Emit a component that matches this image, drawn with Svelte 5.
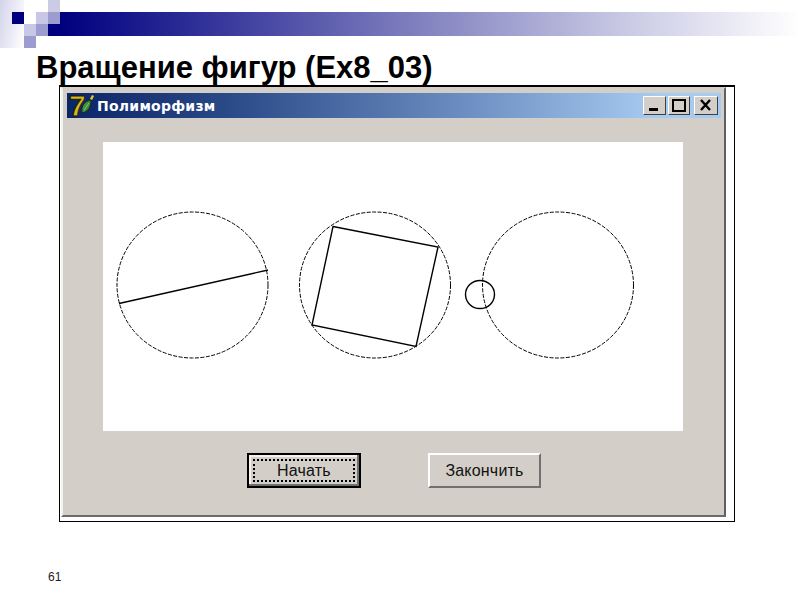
<script lang="ts">
  const circles = [
    { cx: 89.5, cy: 143, rx: 75.5, ry: 73 },
    { cx: 272, cy: 143, rx: 75.5, ry: 73 },
    { cx: 455, cy: 143, rx: 75.5, ry: 73 },
  ];
</script>

<div class="slide">
  <div class="decor" aria-hidden="true">
    <div class="fade"></div>
    <div class="sq navy s1"></div>
    <div class="sq top"></div>
    <div class="sq light s2"></div>
    <div class="sq mid s3"></div>
    <div class="band"></div>
    <div class="sq light s4"></div>
    <div class="sq mid s5"></div>
    <div class="sq navy s6"></div>
    <div class="sq mid s7"></div>
  </div>

  <h1>Вращение фигур (Ex8_03)</h1>

  <div class="frame">
    <div class="window">
      <div class="titlebar">
        <div class="app-icon">
          <span class="seven">7</span>
          <svg class="leaf" width="13" height="20" viewBox="0 0 13 20">
            <path d="M1 18C0 11 3 6 10 5 10 12 7 17 1 18z" fill="#3f8f3a" stroke="#0e2e18" stroke-width="1" />
            <path d="M3 15l5-7" stroke="#8fc070" stroke-width="1" fill="none" />
            <path d="M9 4l2-4 2 1-2 4z" fill="#e8d020" />
          </svg>
        </div>
        <span class="caption">Полиморфизм</span>
        <div class="controls">
          <button class="ctl" aria-label="Свернуть">
            <svg width="21" height="17" viewBox="0 0 21 17"><rect x="5" y="11" width="9" height="3" fill="#000" /></svg>
          </button>
          <button class="ctl max" aria-label="Развернуть">
            <svg width="20" height="17" viewBox="0 0 20 17"><rect x="4" y="3" width="12" height="11" fill="none" stroke="#000" stroke-width="2" /></svg>
          </button>
          <button class="ctl close" aria-label="Закрыть">
            <svg width="22" height="17" viewBox="0 0 22 17"><path d="M6 3l9 10M15 3l-9 10" stroke="#000" stroke-width="2.4" fill="none" /></svg>
          </button>
        </div>
      </div>

      <div class="canvas">
        <svg width="580" height="289" viewBox="0 0 580 289">
          {#each circles as c}
            <ellipse cx={c.cx} cy={c.cy} rx={c.rx} ry={c.ry} class="orbit" />
          {/each}
          <line x1="16" y1="161.5" x2="165" y2="128" class="shape" />
          <polygon points="230,84.5 335,105 313,204.5 209,183" class="shape" />
          <ellipse cx="377" cy="152.5" rx="14.5" ry="14" class="shape" />
        </svg>
      </div>

      <div class="actions">
        <button class="btn default"><span class="focus">Начать</span></button>
        <button class="btn">Закончить</button>
      </div>
    </div>
  </div>

  <div class="page-num">61</div>
</div>

<style>
  :global(body) {
    margin: 0;
    background: #fff;
  }

  .slide {
    width: 800px;
    height: 600px;
    overflow: hidden;
    background: #fff;
    display: flex;
    flex-direction: column;
    font-family: "Liberation Sans", Arial, sans-serif;
    color: #000;
  }

  .decor {
    display: grid;
    grid-template-columns: repeat(5, 12px) 1fr;
    grid-template-rows: repeat(4, 12px);
    height: 48px;
    flex-shrink: 0;
  }

  .fade {
    grid-column: 1 / 3;
    grid-row: 1 / 5;
    background: linear-gradient(100deg, #d4d4ea 0%, #eeeef8 60%, #fff 100%);
  }

  .sq.navy { background: #00007f; }
  .sq.light { background: #c8c8e6; }
  .sq.mid { background: #9c9cd0; }
  .sq.top { grid-column: 5; grid-row: 1; background: #cbcbe6; }

  .s1 { grid-column: 2; grid-row: 2; }
  .s2 { grid-column: 4; grid-row: 2; }
  .s3 { grid-column: 5; grid-row: 2; }
  .s4 { grid-column: 3; grid-row: 3; }
  .s5 { grid-column: 4; grid-row: 3; }
  .s6 { grid-column: 5; grid-row: 3; }
  .s7 { grid-column: 3; grid-row: 4; }

  .band {
    grid-column: 6;
    grid-row: 2 / 4;
    background: linear-gradient(90deg, #00007f 0%, #33339a 20%, #8a8ac4 52%, #c8c8e4 76%, #fff 100%);
  }

  h1 {
    margin: 2px 0 0 36px;
    height: 35px;
    font-size: 31px;
    line-height: 35px;
    font-weight: 700;
    white-space: nowrap;
  }

  .frame {
    margin: 0 0 0 59px;
    width: 676px;
    height: 437px;
    box-sizing: border-box;
    border: 1px solid #000;
    border-top-width: 2px;
    padding: 0 8px 4px 1px;
    background: #fff;
    flex-shrink: 0;
  }

  .window {
    height: 100%;
    box-sizing: border-box;
    background: #d3cfc8;
    border: 2px solid;
    border-color: #d3cfc8 #606060 #6a6a66 #f4f2ee;
    padding: 4px 3px 0 4px;
    display: flex;
    flex-direction: column;
  }

  .titlebar {
    height: 25px;
    flex-shrink: 0;
    display: flex;
    align-items: center;
    background: linear-gradient(90deg, #0c2468 0%, #2a4a88 25%, #6a8cc0 60%, #a6caf0 90%);
  }

  .app-icon {
    position: relative;
    width: 27px;
    height: 25px;
    flex-shrink: 0;
  }

  .seven {
    display: block;
    margin-left: 2px;
    font-weight: 700;
    font-size: 30px;
    line-height: 25px;
    color: #d8b81a;
    -webkit-text-stroke: 1px #1c1c08;
  }

  /* sits over the foot of the 7 */
  .leaf {
    position: absolute;
    left: 14px;
    top: 2px;
  }

  .caption {
    margin-left: 3px;
    color: #fff;
    font-family: "DejaVu Sans", sans-serif;
    font-weight: 700;
    font-size: 14px;
    letter-spacing: 0.25px;
    white-space: nowrap;
  }

  .controls {
    margin-left: auto;
    margin-right: 3px;
    display: flex;
    gap: 2px;
  }

  .ctl {
    width: 23px;
    height: 19px;
    padding: 0;
    background: #d3cfc8;
    border: 1px solid;
    border-color: #fff #404040 #404040 #fff;
    box-sizing: border-box;
    display: flex;
    align-items: center;
    justify-content: center;
  }

  .ctl.max {
    width: 22px;
  }

  .ctl.close {
    margin-left: 2px;
    width: 24px;
  }

  .canvas {
    margin: 24px 0 0 36px;
    width: 580px;
    height: 289px;
    background: #fff;
    flex-shrink: 0;
  }

  .canvas svg {
    display: block;
  }

  .orbit {
    fill: none;
    stroke: #000;
    stroke-width: 1;
    stroke-dasharray: 4 1.5;
  }

  .shape {
    fill: none;
    stroke: #000;
    stroke-width: 1.4;
  }

  .actions {
    margin: 22px 0 0 180px;
    display: flex;
    gap: 67px;
  }

  .btn {
    width: 113px;
    height: 35px;
    box-sizing: border-box;
    padding: 0;
    background: #d3cfc8;
    border: 2px solid;
    border-color: #fff #707070 #707070 #fff;
    font-family: "Liberation Sans", Arial, sans-serif;
    font-size: 16px;
    letter-spacing: 0.2px;
    color: #111;
    display: flex;
    align-items: center;
    justify-content: center;
  }

  .btn.default {
    width: 114px;
    border: 2px solid #000;
    box-shadow: inset -2px -2px 0 #707070, inset 2px 2px 0 #f4f2ee;
    padding: 4px;
  }

  .focus {
    flex: 1;
    align-self: stretch;
    display: flex;
    align-items: center;
    justify-content: center;
    border: 2px dotted #000;
  }

  .page-num {
    margin: 48px 0 0 48px;
    font-size: 12px;
    line-height: 14px;
    color: #222;
  }
</style>
